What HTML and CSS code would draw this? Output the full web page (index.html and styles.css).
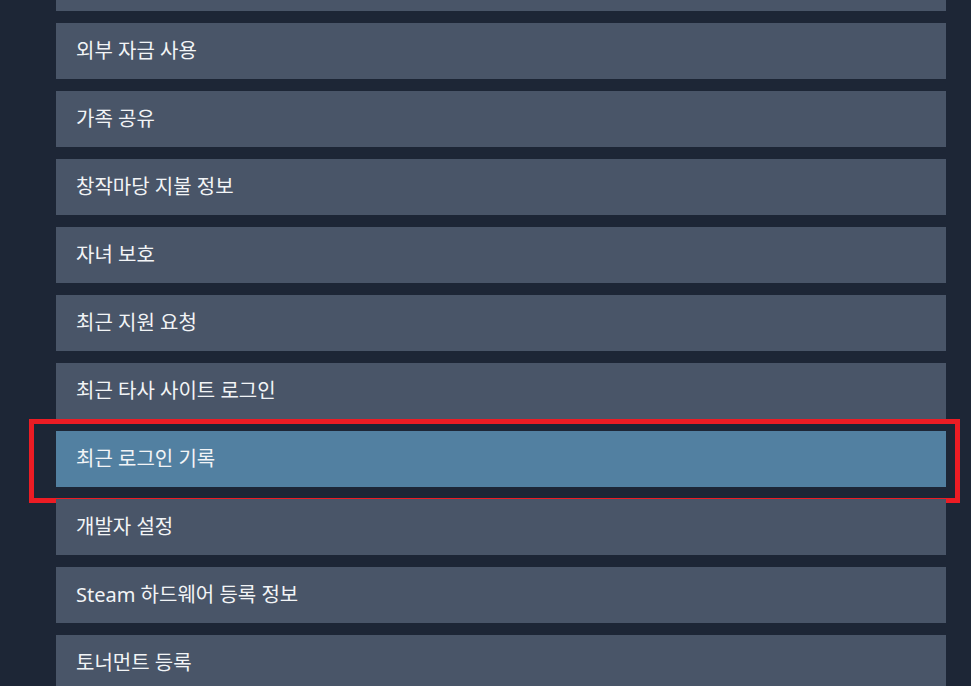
FILE: index.html
```html
<!DOCTYPE html>
<html lang="ko">
<head>
<meta charset="utf-8">
<link rel="stylesheet" href="styles.css">
</head>
<body>
<div class="page">
  <ul class="menu">
    <li class="item">계정 세부 정보</li>
    <li class="item">외부 자금 사용</li>
    <li class="item">가족 공유</li>
    <li class="item">창작마당 지불 정보</li>
    <li class="item">자녀 보호</li>
    <li class="item">최근 지원 요청</li>
    <li class="item">최근 타사 사이트 로그인</li>
    <li class="item active">최근 로그인 기록<span class="mark"></span></li>
    <li class="item">개발자 설정</li>
    <li class="item">Steam 하드웨어 등록 정보</li>
    <li class="item">토너먼트 등록</li>
  </ul>
</div>
</body>
</html>
```
FILE: styles.css
```css
html, body {
  margin: 0;
  padding: 0;
  height: 100%;
  overflow: hidden;
}
body {
  background: #1d2636;
  font-family: "Noto Sans", "Noto Sans CJK KR", sans-serif;
}
.page {
  padding-left: 56px;
  width: 890px;
}
.menu {
  list-style: none;
  margin: -45px 0 0 0;
  padding: 0;
  display: flex;
  flex-direction: column;
  gap: 12px;
}
.item {
  position: relative;
  height: 56px;
  display: flex;
  align-items: center;
  padding-left: 20px;
  background: #495568;
  color: #f2f4f6;
  font-size: 20px;
  line-height: 1;
}
.item.active {
  background: #5280a1;
}
.mark {
  position: absolute;
  left: -27px;
  top: -12px;
  right: -14px;
  bottom: -16px;
  border: 5px solid #ec1c24;
  pointer-events: none;
}
```
